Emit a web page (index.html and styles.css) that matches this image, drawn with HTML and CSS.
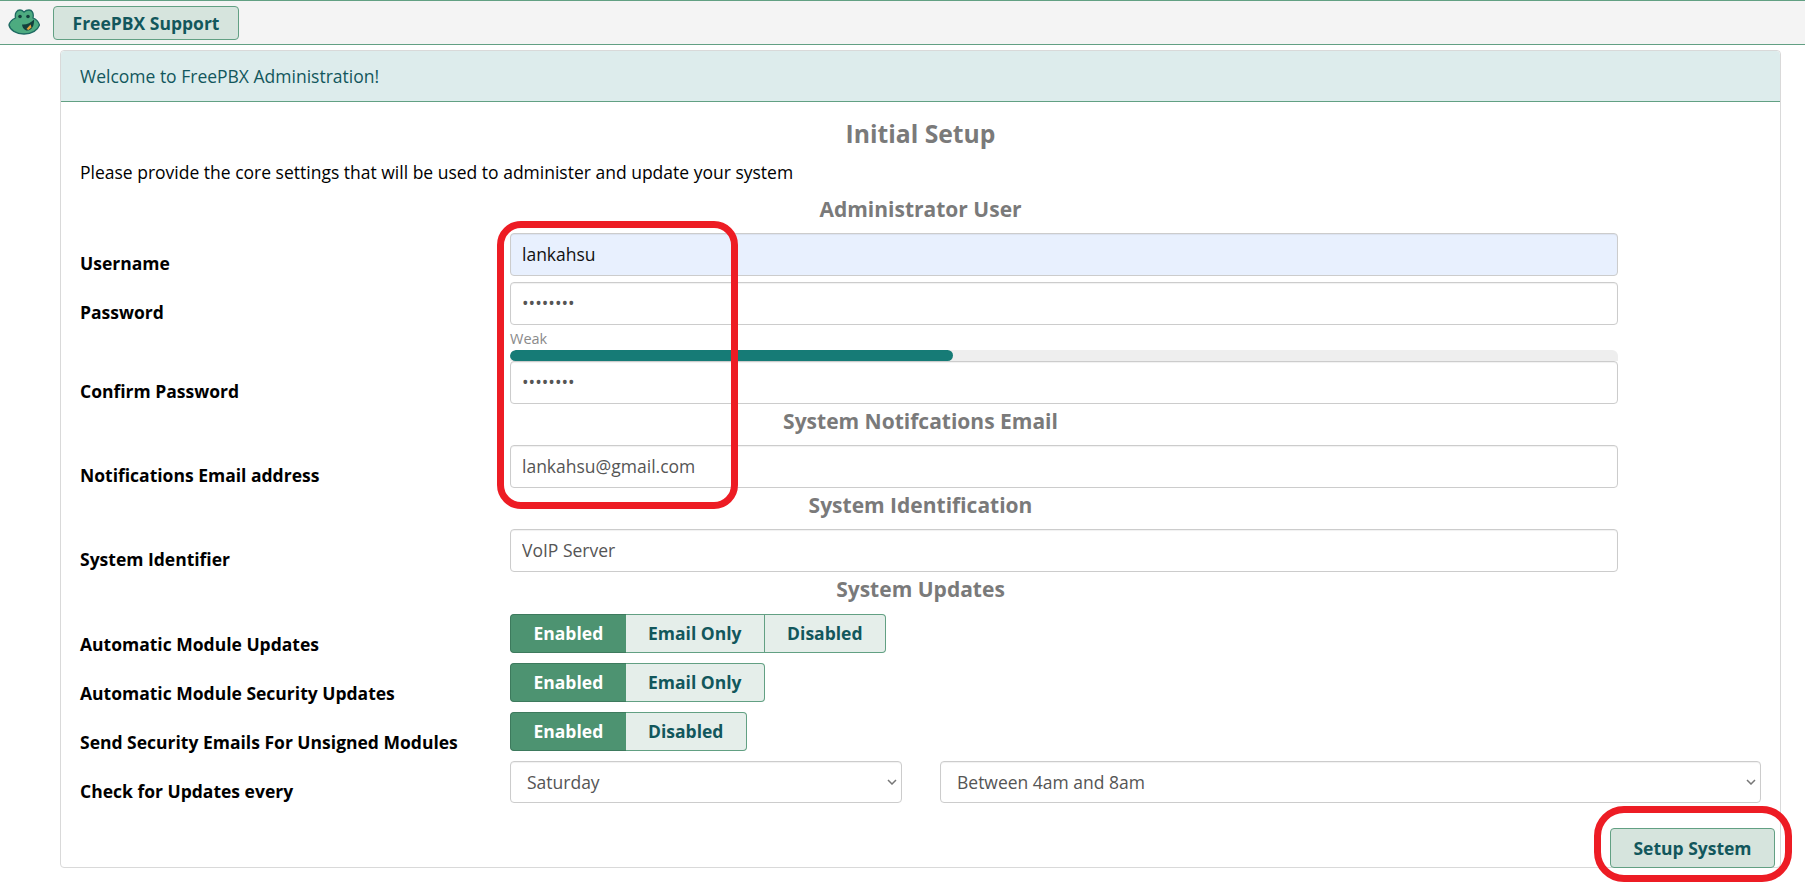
FILE: index.html
```html
<!DOCTYPE html>
<html lang="en">
<head>
  <meta charset="UTF-8">
  <title>FreePBX Administration</title>
  <link rel="stylesheet" href="styles.css">
</head>
<body>
  <div class="topbar">
    <svg class="frog" viewBox="0 0 32 26" width="32" height="26">
      <path d="M1 16 C2 12 5 10 7.500 9 C6.500 4 9 1 12 1 C14 1 15 2 16 3 C17 2 18.500 1 21 1 C24 1 26 4 25 9 C28 10 30.500 13 31.500 16 C30 21 24 25 16 25 C8 25 2 21 1 16 Z" fill="#4dab80" stroke="#1e6a62" stroke-width="1.300"/>
      <circle cx="12" cy="7.500" r="1.800" fill="#123f3c"/>
      <circle cx="20" cy="7.500" r="1.800" fill="#123f3c"/>
      <path d="M14 15.500 C18 16 23 14 26 10.500 C26.500 16 24 21.500 19.500 21.500 C16.500 21.500 14.500 19 14 15.500 Z" fill="#123f3c"/>
      <path d="M18.500 20 L22.500 15.500 L23.500 18.500 L20.500 21 Z" fill="#e6a23c"/>
    </svg>
    <button class="btn support">FreePBX Support</button>
  </div>

  <div class="card">
    <div class="card-head">Welcome to FreePBX Administration!</div>
    <div class="card-body">
      <h3 class="title">Initial Setup</h3>
      <p class="intro">Please provide the core settings that will be used to administer and update your system</p>

      <h4 class="section first">Administrator User</h4>
      <div class="row gap">
        <label>Username</label>
        <input class="field autofill" type="text" value="lankahsu">
      </div>
      <div class="row">
        <label>Password</label>
        <input class="field" type="password" value="lankahsu">
      </div>
      <div class="row strength">
        <div></div>
        <div>
          <div class="weak">Weak</div>
          <div class="progress"><div class="progress-bar" style="width: 40%"></div></div>
        </div>
      </div>
      <div class="row">
        <label>Confirm Password</label>
        <input class="field" type="password" value="lankahsu">
      </div>

      <h4 class="section">System Notifcations Email</h4>
      <div class="row">
        <label>Notifications Email address</label>
        <input class="field" type="text" value="lankahsu@gmail.com">
      </div>

      <h4 class="section">System Identification</h4>
      <div class="row">
        <label>System Identifier</label>
        <input class="field" type="text" value="VoIP Server">
      </div>

      <h4 class="section updates">System Updates</h4>
      <div class="row toggle">
        <label>Automatic Module Updates</label>
        <div class="radioset">
          <span class="on">Enabled</span><span>Email Only</span><span>Disabled</span>
        </div>
      </div>
      <div class="row toggle">
        <label>Automatic Module Security Updates</label>
        <div class="radioset">
          <span class="on">Enabled</span><span>Email Only</span>
        </div>
      </div>
      <div class="row toggle">
        <label>Send Security Emails For Unsigned Modules</label>
        <div class="radioset">
          <span class="on">Enabled</span><span>Disabled</span>
        </div>
      </div>
      <div class="row">
        <label>Check for Updates every</label>
        <div class="selects">
          <select class="field"><option>Saturday</option></select>
          <select class="field"><option>Between 4am and 8am</option></select>
        </div>
      </div>
      <div class="actions">
        <button class="btn setup">Setup System</button>
      </div>
    </div>
  </div>

  <div class="ring ring-fields"></div>
  <div class="ring ring-setup"></div>
</body>
</html>
```

FILE: styles.css
```css
* {
  box-sizing: border-box;
}
html, body {
  height: 882px;
  overflow: hidden;
}
body {
  margin: 0;
  font-family: "Open Sans", sans-serif;
  font-size: 17.5px;
  color: #000;
  background: #fff;
}
.topbar {
  display: flex;
  align-items: center;
  height: 45px;
  padding-left: 8px;
  gap: 13px;
  background: #f4f4f4;
  border-top: 1px solid #62a083;
  border-bottom: 1px solid #62a083;
}
.frog {
  margin-top: -1px;
}
.btn {
  font-family: "Open Sans", sans-serif;
  font-size: 17.5px;
  font-weight: 700;
  color: #12575c;
  background: #d6e4dd;
  border: 1px solid #62a083;
  border-radius: 4px;
  padding: 0;
}
.support {
  width: 186px;
  height: 34px;
}
.card {
  margin: 5px 24px 0 60px;
  height: 818px;
  border: 1px solid #d9d9d9;
  border-radius: 4px;
}
.card-head {
  height: 51px;
  padding: 0 19px;
  line-height: 50px;
  color: #12575c;
  background: #ddecec;
  border-bottom: 1px solid #62a083;
  border-radius: 4px 4px 0 0;
}
.card-body {
  padding: 0 19px;
}
.title {
  margin: 0;
  padding-top: 16px;
  height: 50px;
  font-size: 24.700px;
  line-height: 32px;
  font-weight: 700;
  text-align: center;
  color: #7a7a7a;
}
.intro {
  margin: 0;
  height: 38px;
  line-height: 24px;
  padding-top: 8px;
}
.section {
  margin: 0;
  height: 41.500px;
  font-size: 21px;
  line-height: 35px;
  font-weight: 700;
  text-align: center;
  color: #7a7a7a;
}
.section.first {
  height: 43px;
  line-height: 39px;
}
.section.updates {
  height: 42px;
}
.row {
  display: grid;
  grid-template-columns: 430px 1108px;
  align-items: center;
}
.row.gap {
  margin-bottom: 6.500px;
}
.row.toggle {
  margin-bottom: 9.500px;
}
.row label {
  font-weight: 700;
  line-height: 21px;
  padding-top: 19px;
}
.row.toggle label {
  padding-top: 20px;
  margin-bottom: -2px;
}
.field {
  display: block;
  width: 100%;
  height: 42.500px;
  padding: 0 11px;
  font-family: "Open Sans", sans-serif;
  font-size: 17.5px;
  color: #555;
  background: #fff;
  border: 1px solid #ccc;
  border-radius: 4px;
  box-shadow: inset 0 1px 1px rgba(0,0,0,0.06);
}
.autofill {
  color: #111;
  background: #e8f0fe;
}
.row.strength {
  height: 36.500px;
  align-items: start;
}
.weak {
  font-size: 14.500px;
  line-height: 18px;
  padding-top: 5px;
  height: 25px;
  color: #8a8a8a;
}
.progress {
  height: 11px;
  background: #eee;
  border-radius: 6px 6px 0 0;
  overflow: hidden;
}
.progress-bar {
  height: 100%;
  background: #167b76;
  border-radius: 6px;
}
.radioset {
  display: flex;
  height: 39.500px;
}
.radioset span {
  display: flex;
  align-items: center;
  padding: 0 22.300px;
  font-weight: 700;
  color: #12575c;
  background: #e5eeea;
  border: 1px solid #62a083;
  border-left: 0;
}
.radioset span:last-child {
  border-radius: 0 4px 4px 0;
}
.radioset .on {
  padding: 0 22.500px;
  color: #fff;
  background: #4d9371;
  border: 1px solid #3d7a5d;
  border-right: 0;
  border-radius: 4px 0 0 4px;
}
.selects {
  display: grid;
  grid-template-columns: 392px 821px;
  width: 1251px;
  gap: 38px;
}
.selects .field {
  padding-left: 16px;
  appearance: none;
  background: #fff url("data:image/svg+xml,%3Csvg xmlns='http://www.w3.org/2000/svg' width='10' height='6' viewBox='0 0 10 6'%3E%3Cpath d='M1 1l4 4 4-4' fill='none' stroke='%23777' stroke-width='1.500'/%3E%3C/svg%3E") no-repeat right 4px center;
}
.actions {
  display: flex;
  justify-content: flex-end;
  margin: 25px -14px 0 0;
}
.setup {
  width: 165px;
  height: 39.500px;
}
.ring {
  position: absolute;
  border: 7px solid #ed1c24;
}
.ring-fields {
  left: 497px;
  top: 221px;
  width: 241px;
  height: 288px;
  border-radius: 24px;
}
.ring-setup {
  left: 1594px;
  top: 806px;
  width: 198px;
  height: 76px;
  border-radius: 30px;
}
```
